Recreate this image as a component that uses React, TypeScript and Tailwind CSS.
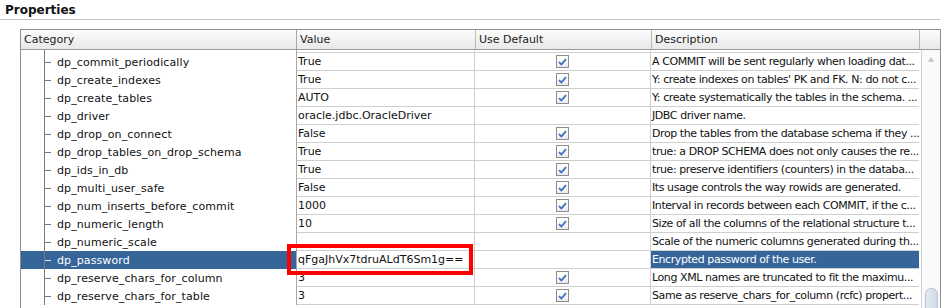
import React from 'react';

type Prop = {
  name: string;
  value: string;
  useDefault: boolean;
  desc: string;
};

const ROWS: Prop[] = [
  { name: 'dp_commit_periodically', value: 'True', useDefault: true, desc: 'A COMMIT will be sent regularly when loading dat...' },
  { name: 'dp_create_indexes', value: 'True', useDefault: true, desc: "Y: create indexes on tables' PK and FK. N: do not c..." },
  { name: 'dp_create_tables', value: 'AUTO', useDefault: true, desc: 'Y: create systematically the tables in the schema. ...' },
  { name: 'dp_driver', value: 'oracle.jdbc.OracleDriver', useDefault: false, desc: 'JDBC driver name.' },
  { name: 'dp_drop_on_connect', value: 'False', useDefault: true, desc: 'Drop the tables from the database schema if they ...' },
  { name: 'dp_drop_tables_on_drop_schema', value: 'True', useDefault: true, desc: 'true: a DROP SCHEMA does not only causes the re...' },
  { name: 'dp_ids_in_db', value: 'True', useDefault: true, desc: 'true: preserve identifiers (counters) in the databa...' },
  { name: 'dp_multi_user_safe', value: 'False', useDefault: true, desc: 'Its usage controls the way rowids are generated.' },
  { name: 'dp_num_inserts_before_commit', value: '1000', useDefault: true, desc: 'Interval in records between each COMMIT, if the c...' },
  { name: 'dp_numeric_length', value: '10', useDefault: true, desc: 'Size of all the columns of the relational structure t...' },
  { name: 'dp_numeric_scale', value: '', useDefault: false, desc: 'Scale of the numeric columns generated during th...' },
  { name: 'dp_password', value: 'qFgaJhVx7tdruALdT6Sm1g==', useDefault: false, desc: 'Encrypted password of the user.' },
  { name: 'dp_reserve_chars_for_column', value: '3', useDefault: true, desc: 'Long XML names are truncated to fit the maximu...' },
  { name: 'dp_reserve_chars_for_table', value: '3', useDefault: true, desc: 'Same as reserve_chars_for_column (rcfc) propert...' },
];

function CheckBox() {
  return (
    <div className="flex h-[13px] w-[13px] items-center justify-center border border-[#8c8c8c] bg-gradient-to-b from-white to-[#ececec]">
      <svg width="9" height="8" viewBox="0 0 9 8">
        <path d="M1 4.2 L3.4 6.5 L8 1.2" fill="none" stroke="#3a6fc4" strokeWidth="1.8" />
      </svg>
    </div>
  );
}

// sliver of the row scrolled off above the first visible one
function Sliver() {
  return (
    <div className="flex h-[3px]">
      <div className="flex w-[276px] shrink-0 border-r border-[#a8a8a8]">
        <div className="w-[23px] shrink-0" />
        <div className="h-full w-px bg-[#7a7a7a]" />
      </div>
      <div className="w-[178px] shrink-0 border-b border-r border-[#cfcfcf]" />
      <div className="w-[176px] shrink-0 border-b border-r border-[#cfcfcf]" />
      <div className="w-[268px] shrink-0 border-b border-[#cfcfcf]" />
    </div>
  );
}

function Row({ r }: { r: Prop }) {
  const selected = r.name === 'dp_password';
  const tick = selected ? 'bg-[#d8e2ee]' : 'bg-[#7a7a7a]';
  return (
    <div className="flex h-[18px] text-[11px] leading-[17px]">
      <div
        className={`flex w-[276px] shrink-0 items-center border-r border-[#a8a8a8] ${
          selected ? 'bg-[#36659a] text-white' : 'text-[#111]'
        }`}
      >
        <div className="w-[23px] shrink-0" />
        <div className="flex h-full w-[13px] shrink-0 items-center">
          <div className="h-full w-px bg-[#7a7a7a]" />
          <div className={`h-px w-[6px] ${tick}`} />
        </div>
        <span className="whitespace-nowrap tracking-[0.1px]">{r.name}</span>
      </div>
      <div className="w-[178px] shrink-0 border-b border-r border-[#cfcfcf] bg-white pl-[1px] whitespace-nowrap text-[#111]">
        {r.value}
      </div>
      <div className="flex w-[176px] shrink-0 items-center justify-center border-b border-r border-[#cfcfcf] bg-white">
        {r.useDefault && <CheckBox />}
      </div>
      <div
        className={`w-[268px] shrink-0 overflow-hidden border-b border-[#cfcfcf] pl-[1px] whitespace-nowrap tracking-[-0.42px] ${
          selected ? 'bg-[#36659a] text-white' : 'bg-white text-[#111]'
        }`}
      >
        {r.desc}
      </div>
    </div>
  );
}

export default function App() {
  return (
    <div
      className="relative h-[308px] w-[949px] overflow-hidden bg-white"
      style={{ fontFamily: '"DejaVu Sans", "Liberation Sans", sans-serif' }}
    >
      {/* Title */}
      <div className="mr-[9px] h-[20px] border-b border-[#c4c4c4] pl-[5px] pt-[3px] text-[12px] font-bold leading-[15px] text-[#111]">
        Properties
      </div>

      {/* Property table */}
      <div className="ml-[20px] mt-[9px] w-[921px] border border-[#8e8e8e]">
        {/* Header */}
        <div className="flex h-[20px] border-b border-[#9a9a9a] bg-gradient-to-b from-[#fbfbfb] to-[#e9e9e9] text-[11px] leading-[19px] text-[#222]">
          <div className="w-[276px] shrink-0 border-r border-[#a8a8a8] pl-[3px]">Category</div>
          <div className="w-[179px] shrink-0 border-r border-[#b8b8b8] pl-[3px]">Value</div>
          <div className="w-[176px] shrink-0 border-r border-[#b8b8b8] pl-[3px]">Use Default</div>
          <div className="w-[268px] shrink-0 border-r border-[#b8b8b8] pl-[3px]">Description</div>
          <div className="flex-1" />
        </div>

        {/* Body */}
        <div className="flex h-[270px]">
          <div className="w-[900px] shrink-0 overflow-hidden">
            <Sliver />
            {ROWS.map((r) => (
              <Row key={r.name} r={r} />
            ))}
          </div>
          {/* Scrollbar */}
          <div className="flex w-[19px] shrink-0 flex-col items-center border-l border-[#d0d0d0] bg-[#fafafa]">
            <svg width="8" height="6" viewBox="0 0 8 6" className="mt-[7px]">
              <path d="M0 6 L4 0 L8 6 Z" fill="#c4c4c4" />
            </svg>
            <div className="mt-[226px] h-[40px] w-[13px] rounded-[6px] border border-[#b9c4d2] bg-gradient-to-r from-[#e3e9f1] to-[#cfd9e6]" />
          </div>
        </div>
      </div>

      {/* Annotation box */}
      <div className="absolute left-[287px] top-[244px] h-[31px] w-[186px] border-[4px] border-[#ff0000]" />
    </div>
  );
}
